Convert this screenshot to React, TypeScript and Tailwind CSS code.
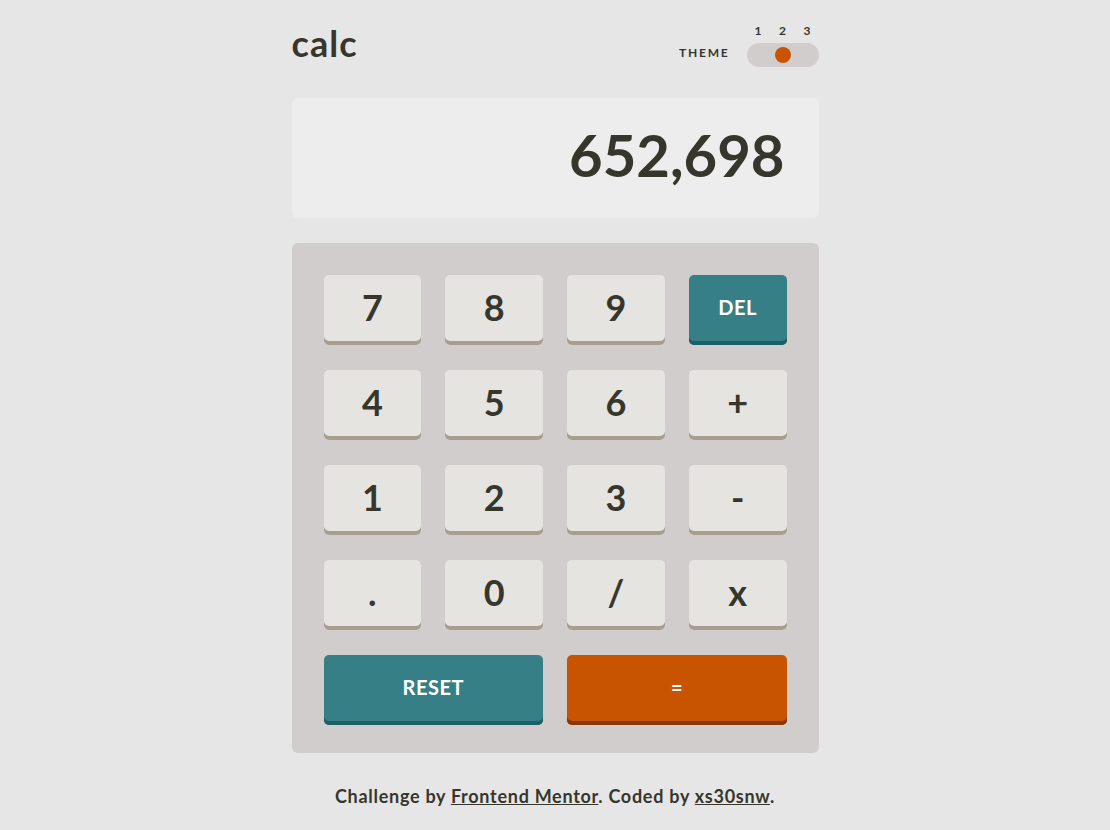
import React from "react";

type Key = { label: string; kind?: "num" | "blue" | "red"; wide?: boolean };

const keys: Key[] = [
  { label: "7" }, { label: "8" }, { label: "9" }, { label: "DEL", kind: "blue" },
  { label: "4" }, { label: "5" }, { label: "6" }, { label: "+" },
  { label: "1" }, { label: "2" }, { label: "3" }, { label: "-" },
  { label: "." }, { label: "0" }, { label: "/" }, { label: "x" },
  { label: "RESET", kind: "blue", wide: true }, { label: "=", kind: "red", wide: true },
];

function CalcKey({ k }: { k: Key }) {
  const base = "h-[70px] rounded-[5px] flex items-center justify-center font-bold pb-[6px]";
  if (k.kind === "blue") {
    return (
      <button className={`${base} ${k.wide ? "col-span-2" : ""} bg-[#377f86] shadow-[inset_0_-4px_0_#1b6066] text-white text-[20px] tracking-wide`}>
        {k.label}
      </button>
    );
  }
  if (k.kind === "red") {
    return (
      <button className={`${base} col-span-2 bg-[#c85402] shadow-[inset_0_-4px_0_#873901] text-white text-[20px]`}>
        {k.label}
      </button>
    );
  }
  return (
    <button className={`${base} bg-[#e5e4e1] shadow-[inset_0_-4px_0_#a79e91] text-[#36362c] text-[36px]`}>
      {k.label}
    </button>
  );
}

export default function App() {
  return (
    <main
      className="min-h-[830px] w-full bg-[#e6e6e6] text-[#36362c] flex flex-col items-center"
      style={{ fontFamily: "Lato, 'Noto Sans', sans-serif" }}
    >
      <div className="w-[527px] pt-[19px]">
        {/* Header */}
        <header className="flex items-end justify-between h-[48px]">
          <h1 className="text-[36px] font-bold leading-none pb-[6px] tracking-[0.03em]">calc</h1>
          <div className="flex items-end gap-[17px]">
            <span className="text-[12px] font-bold tracking-[0.15em] pb-[5px]">THEME</span>
            <div className="flex flex-col items-center w-[72px]">
              <div className="flex w-full justify-between px-[8px] text-[12px] font-bold leading-none mb-[6px]">
                <span>1</span>
                <span>2</span>
                <span>3</span>
              </div>
              <div className="w-[72px] h-[24px] rounded-full bg-[#d2cdcd] flex items-center justify-center">
                <span className="w-[16px] h-[16px] rounded-full bg-[#c85402]" />
              </div>
            </div>
          </div>
        </header>

        {/* Display */}
        <section className="mt-[31px] h-[120px] rounded-[6px] bg-[#ededed] flex items-center justify-end px-[34px] pb-[6px]">
          <span className="text-[58px] font-bold leading-none">652,698</span>
        </section>

        {/* Keypad */}
        <section className="mt-[25px] rounded-[6px] bg-[#d2cdcd] px-[32px] pt-[32px] pb-[28px] grid grid-cols-4 gap-x-[24px] gap-y-[25px]">
          {keys.map((k) => (
            <CalcKey key={k.label} k={k} />
          ))}
        </section>

        {/* Footer */}
        <footer className="mt-[30px] text-center text-[18px] font-bold tracking-[0.04em]">
          Challenge by <a className="underline">Frontend Mentor</a>. Coded by <a className="underline">xs30snw</a>.
        </footer>
      </div>
    </main>
  );
}
